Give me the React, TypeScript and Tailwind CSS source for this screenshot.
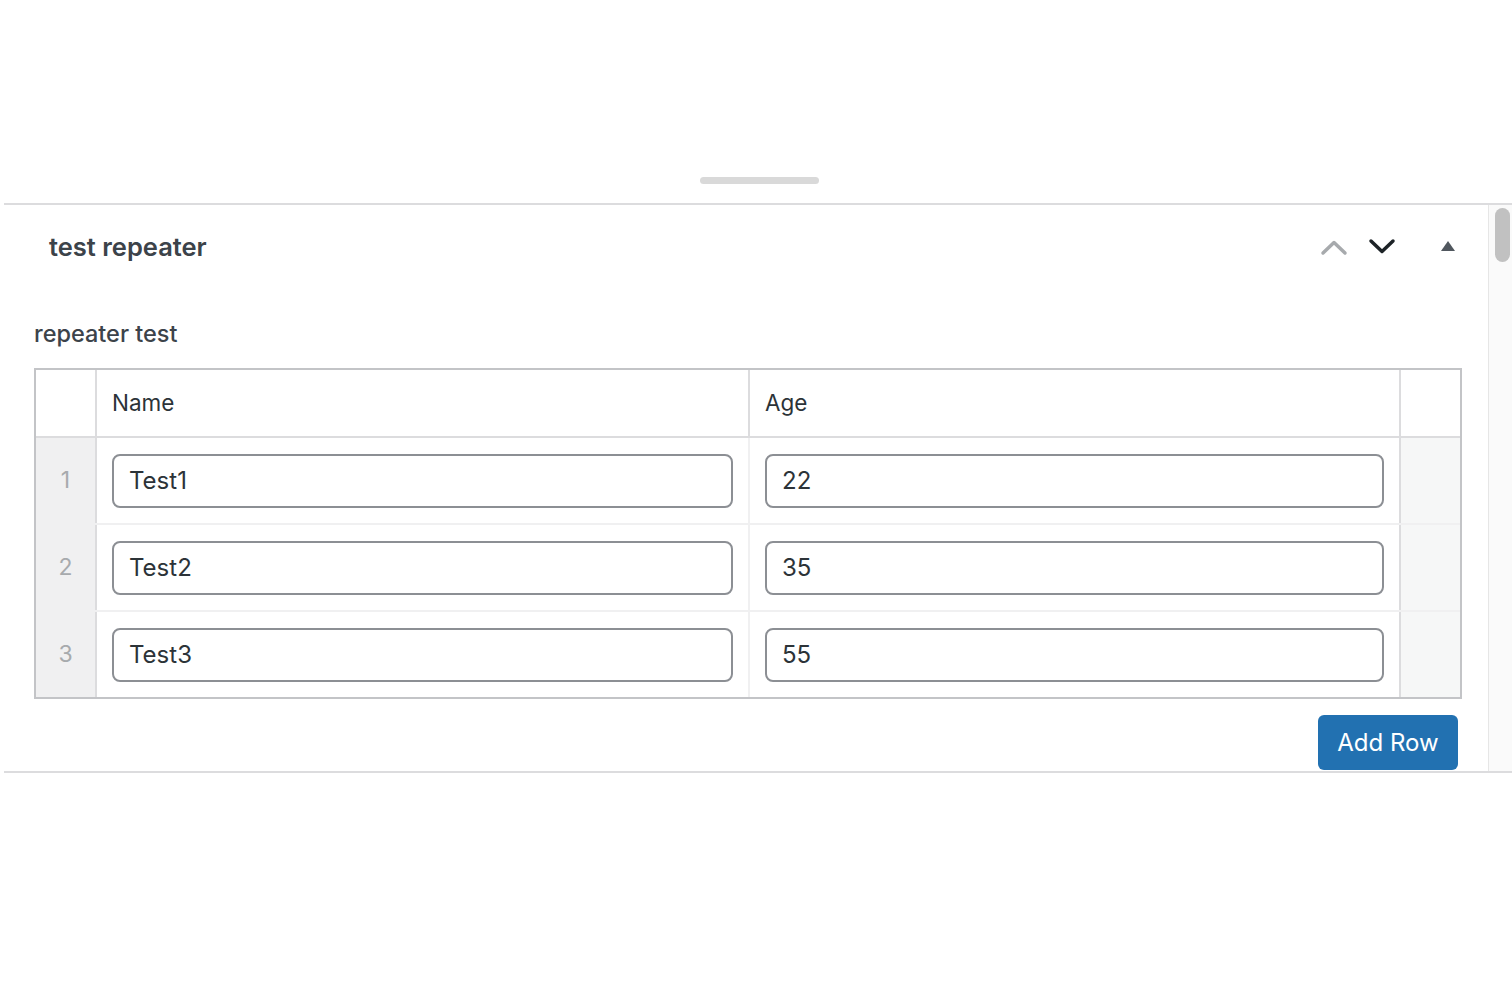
import React from 'react';

const rows = [
  { name: 'Test1', age: '22' },
  { name: 'Test2', age: '35' },
  { name: 'Test3', age: '55' },
];

function ChevronUp({ className }: { className?: string }) {
  return (
    <svg width="28" height="18" viewBox="0 0 28 18" className={className} fill="none">
      <path d="M3 15 L14 4.5 L25 15" stroke="currentColor" strokeWidth="3.5" strokeLinecap="round" strokeLinejoin="round" />
    </svg>
  );
}

function ChevronDown({ className }: { className?: string }) {
  return (
    <svg width="28" height="18" viewBox="0 0 28 18" className={className} fill="none">
      <path d="M3 3 L14 13.5 L25 3" stroke="currentColor" strokeWidth="3.5" strokeLinecap="round" strokeLinejoin="round" />
    </svg>
  );
}

function TriangleUp({ className }: { className?: string }) {
  return (
    <svg width="16" height="12" viewBox="0 0 16 12" className={className}>
      <path d="M1 11 L8 1 L15 11 Z" fill="currentColor" />
    </svg>
  );
}

export default function App() {
  return (
    <div className="min-h-screen bg-white text-[#3c434a]" style={{ fontFamily: 'Inter, "Noto Sans", sans-serif' }}>
      {/* drag handle */}
      <div className="pt-[177px] pl-[700px]">
        <div className="w-[119px] h-[7px] rounded-full bg-[#d9d9d9]" />
      </div>

      {/* panel */}
      <div className="mt-[19px] ml-[4px] flex border-t-2 border-b-2 border-[#dcdcde]">
        <div className="flex-1">
          {/* header */}
          <div className="h-[84px] flex items-center pl-[45px] pr-[32px]">
            <h2 className="text-[25.5px] font-semibold text-[#3c434a] flex-1">test repeater</h2>
            <div className="flex items-center">
              <button className="text-[#a7aaad] w-[28px] flex justify-center"><ChevronUp /></button>
              <button className="text-[#1d2327] w-[28px] ml-[20px] flex justify-center"><ChevronDown /></button>
              <button className="text-[#50575e] w-[16px] ml-[44px] flex justify-center -mt-[3px]"><TriangleUp /></button>
            </div>
          </div>

          {/* body */}
          <div className="pl-[30px] pr-[26px]">
            <div className="mt-[30px] h-[30px] leading-[30px] text-[23.5px] font-medium text-[#3c434a]">repeater test</div>

            <div className="mt-[19px] border-2 border-[#c3c4c7]">
              {/* header row */}
              <div className="flex h-[68px] border-b-2 border-[#dcdcde] text-[22.5px] text-[#2c3338]">
                <div className="w-[61px] border-r-2 border-[#dcdcde]" />
                <div className="w-[653px] border-r-2 border-[#dcdcde] pl-[15px] flex items-center">Name</div>
                <div className="flex-1 border-r-2 border-[#dcdcde] pl-[15px] flex items-center">Age</div>
                <div className="w-[59px]" />
              </div>

              {rows.map((r, i) => (
                <div
                  key={i}
                  className={
                    i < rows.length - 1
                      ? 'flex h-[87px] border-b-2 border-[#f0f0f1]'
                      : 'flex h-[85px]'
                  }
                >
                  <div className="w-[61px] bg-[#f0f0f1] border-r-2 border-[#dcdcde] flex items-center justify-center text-[23px] text-[#a7aaad]">
                    {i + 1}
                  </div>
                  <div className="w-[653px] border-r-2 border-[#f0f0f1] px-[15px] flex items-center">
                    <input
                      defaultValue={r.name}
                      className="w-full h-[54px] border-2 border-[#8c8f94] rounded-[8px] px-[15px] text-[24px] text-[#2c3338] bg-white outline-none"
                    />
                  </div>
                  <div className="flex-1 border-r-2 border-[#dcdcde] px-[15px] flex items-center">
                    <input
                      defaultValue={r.age}
                      className="w-full h-[54px] border-2 border-[#8c8f94] rounded-[8px] px-[15px] text-[24px] text-[#2c3338] bg-white outline-none"
                    />
                  </div>
                  <div className="w-[59px] bg-[#f6f7f7]" />
                </div>
              ))}
            </div>

            <div className="flex justify-end mt-[16px] pr-[4px] pb-px">
              <button className="h-[55px] w-[140px] rounded-[6px] bg-[#2271b1] text-white text-[24px]">Add Row</button>
            </div>
          </div>
        </div>

        {/* scrollbar */}
        <div className="w-[24px] border-l border-[#e6e6e6] bg-[#fafafa]">
          <div className="ml-[6px] mt-[3px] w-[15px] h-[54px] rounded-full bg-[#c1c1c1]" />
        </div>
      </div>
    </div>
  );
}
